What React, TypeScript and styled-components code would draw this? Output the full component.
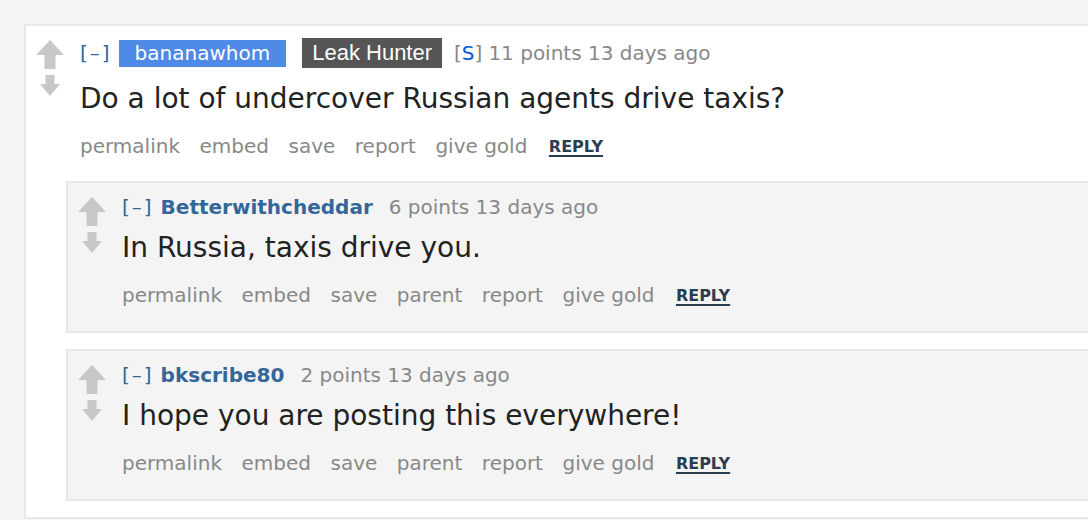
import styled, { createGlobalStyle } from "styled-components";

const GlobalStyle = createGlobalStyle`
  html, body {
    margin: 0;
    padding: 0;
    background: #f4f4f4;
  }
  body {
    font-family: "DejaVu Sans", Verdana, sans-serif;
    overflow: hidden;
  }
`;

const Page = styled.div`
  height: 520px;
  padding: 24px 0 0 24px;
  box-sizing: border-box;
  overflow: hidden;
`;

const Card = styled.div`
  background: #fff;
  border: 2px solid #e8e8e8;
  border-right: none;
  padding: 0 0 16px 0;
`;

const Entry = styled.div<{ $nested?: boolean }>`
  display: flex;
  align-items: flex-start;
  padding-left: 10px;
  padding-top: ${(p) => (p.$nested ? "11px" : "12px")};
  padding-bottom: ${(p) => (p.$nested ? "22px" : "21px")};
`;

const Votes = styled.div<{ $nested?: boolean }>`
  width: 28px;
  margin-right: 16px;
  display: flex;
  flex-direction: column;
  align-items: center;
  gap: 6px;
  padding-top: ${(p) => (p.$nested ? "3px" : "2px")};
  flex-shrink: 0;
`;

const Content = styled.div`
  flex: 1;
  min-width: 0;
`;

const Tagline = styled.div<{ $nested?: boolean }>`
  display: flex;
  align-items: center;
  height: ${(p) => (p.$nested ? "26px" : "30px")};
  font-size: 20px;
  color: #888;
  white-space: nowrap;
`;

const Collapse = styled.span`
  color: #369;
  letter-spacing: 2px;
  margin-right: 7px;
`;

const Author = styled.span`
  color: #336699;
  font-weight: bold;
  margin-right: 16px;
`;

const Badge = styled.span<{ $tone: "blue" | "dark" }>`
  display: inline-flex;
  align-items: center;
  color: #fff;
  white-space: nowrap;
  ${(p) =>
    p.$tone === "blue"
      ? `
    background: #4f8ae6;
    height: 27px;
    padding: 0 16px;
    font-size: 20px;
    margin-right: 16px;
  `
      : `
    background: #555;
    height: 30px;
    padding: 0 10px;
    font-family: "Liberation Sans", Arial, sans-serif;
    font-size: 22px;
    margin-right: 12px;
  `}
`;

const Submitter = styled.span`
  color: #888;
  margin-right: 6px;
  b {
    color: #0055df;
    font-weight: normal;
  }
`;

const Body = styled.p<{ $nested?: boolean }>`
  margin: ${(p) => (p.$nested ? "8px 0 0" : "11px 0 0")};
  font-size: 28px;
  line-height: 40px;
  color: #222;
`;

const Buttons = styled.ul`
  list-style: none;
  margin: 13px 0 0;
  padding: 0;
  display: flex;
  align-items: center;
  gap: 19.5px;
  height: 28px;
  font-size: 20px;
  color: #888;
`;

const Reply = styled.li`
  font-size: 16px;
  font-weight: bold;
  color: #2b3e50;
  text-decoration: underline;
  text-underline-offset: 3px;
  text-decoration-thickness: 2px;
  margin-left: 2px;
`;

const Children = styled.div`
  display: flex;
  flex-direction: column;
  gap: 16px;
  padding-left: 40px;
`;

const Child = styled.div`
  background: #f4f4f4;
  border: 2px solid #e8e8e8;
  border-right: none;
`;

const UpArrow = () => (
  <svg width="28" height="29" viewBox="0 0 28 29" style={{ filter: "blur(0.4px)" }}>
    <path d="M14 0 L28 15 L19.5 15 L19.5 29 L8.5 29 L8.5 15 L0 15 Z" fill="#c8c8c8" />
  </svg>
);

const DownArrow = () => (
  <svg width="20" height="21" viewBox="0 0 20 21" style={{ filter: "blur(0.4px)" }}>
    <path d="M5.5 0 H14.5 V9 H20 L10 21 L0 9 H5.5 Z" fill="#c8c8c8" />
  </svg>
);

type Reply = {
  author: string;
  points: string;
  text: string;
};

const replies: Reply[] = [
  { author: "Betterwithcheddar", points: "6 points", text: "In Russia, taxis drive you." },
  { author: "bkscribe80", points: "2 points", text: "I hope you are posting this everywhere!" },
];

function App() {
  return (
    <>
      <GlobalStyle />
      <Page>
        <Card>
          <Entry>
            <Votes>
              <UpArrow />
              <DownArrow />
            </Votes>
            <Content>
              <Tagline>
                <Collapse>[–]</Collapse>
                <Badge $tone="blue">bananawhom</Badge>
                <Badge $tone="dark">Leak Hunter</Badge>
                <Submitter>
                  [<b>S</b>]
                </Submitter>
                <span>11 points 13 days ago</span>
              </Tagline>
              <Body>Do a lot of undercover Russian agents drive taxis?</Body>
              <Buttons>
                <li>permalink</li>
                <li>embed</li>
                <li>save</li>
                <li>report</li>
                <li>give gold</li>
                <Reply>REPLY</Reply>
              </Buttons>
            </Content>
          </Entry>
          <Children>
            {replies.map((r) => (
              <Child key={r.author}>
                <Entry $nested>
                  <Votes $nested>
                    <UpArrow />
                    <DownArrow />
                  </Votes>
                  <Content>
                    <Tagline $nested>
                      <Collapse>[–]</Collapse>
                      <Author>{r.author}</Author>
                      <span>{r.points} 13 days ago</span>
                    </Tagline>
                    <Body $nested>{r.text}</Body>
                    <Buttons>
                      <li>permalink</li>
                      <li>embed</li>
                      <li>save</li>
                      <li>parent</li>
                      <li>report</li>
                      <li>give gold</li>
                      <Reply>REPLY</Reply>
                    </Buttons>
                  </Content>
                </Entry>
              </Child>
            ))}
          </Children>
        </Card>
      </Page>
    </>
  );
}

export default App;
